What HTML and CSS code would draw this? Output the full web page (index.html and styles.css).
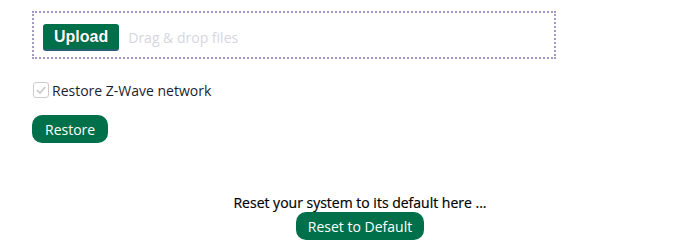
FILE: index.html
```html
<!DOCTYPE html>
<html lang="en">
<head>
    <meta charset="UTF-8">
    <title>Restore</title>
    <link rel="stylesheet" href="styles.css">
</head>
<body>
<div class="page">
    <div class="dropzone">
        <span class="btnUpload">Upload</span>
        <span class="dropHint">Drag &amp; drop files</span>
    </div>
    <label class="check">
        <span class="box">
            <svg width="12" height="12" viewBox="0 0 12 12"><path d="M2 6.2 L5 9 L10.2 3" fill="none" stroke="#c8c8c8" stroke-width="1.6"/></svg>
        </span>
        <span>Restore Z-Wave network</span>
    </label>
    <div class="actions">
        <button class="btn">Restore</button>
    </div>
    <div class="reset">
        <p class="resetText">Reset your system to its default here ...</p>
        <button class="btn btnWide">Reset to Default</button>
    </div>
</div>
</body>
</html>
```

FILE: styles.css
```css
*{
    margin: 0;
    padding: 0;
    box-sizing: border-box;
}
body{
    font-family: "Open Sans", sans-serif;
    font-size: 14px;
    color: #1d1d2b;
    background: #fff;
}
.page{
    padding: 11px 12px 0 32px;
}
.dropzone{
    width: 524px;
    height: 48px;
    border: 2px dotted #9e9ac4;
    padding: 5px 9px 0;
    display: flex;
    align-items: center;
    gap: 9px;
}
.btnUpload{
    display: inline-block;
    height: 27px;
    line-height: 26px;
    padding: 0 11px;
    background: #00704a;
    border-bottom: 2px solid #2d5e74;
    border-radius: 3px;
    color: #fff;
    font-family: "Liberation Sans", Arial, sans-serif;
    font-weight: bold;
    font-size: 16px;
    text-shadow: 0 0 1px #003322;
}
.dropHint{
    color: #d6d6df;
    font-size: 14px;
}
.check{
    display: flex;
    align-items: center;
    margin-top: 22px;
    height: 18px;
}
.check .box{
    flex: none;
    width: 16px;
    height: 16px;
    margin: 0 3px 0 1px;
    border: 1px solid #cbcbcb;
    border-radius: 3px;
    display: flex;
    align-items: center;
    justify-content: center;
}
.actions{
    margin-top: 16px;
}
.btn{
    font-family: "Open Sans", sans-serif;
    font-size: 14px;
    color: #fff;
    background: #00704a;
    border: none;
    border-radius: 10px;
    height: 28px;
    padding: 0 13px;
}
.reset{
    margin-top: 50px;
    display: flex;
    flex-direction: column;
    align-items: center;
}
.resetText{
    line-height: 19px;
    color: #000;
    -webkit-text-stroke: 0.2px #000;
}
.btnWide{
    padding: 0 12px;
}
```
